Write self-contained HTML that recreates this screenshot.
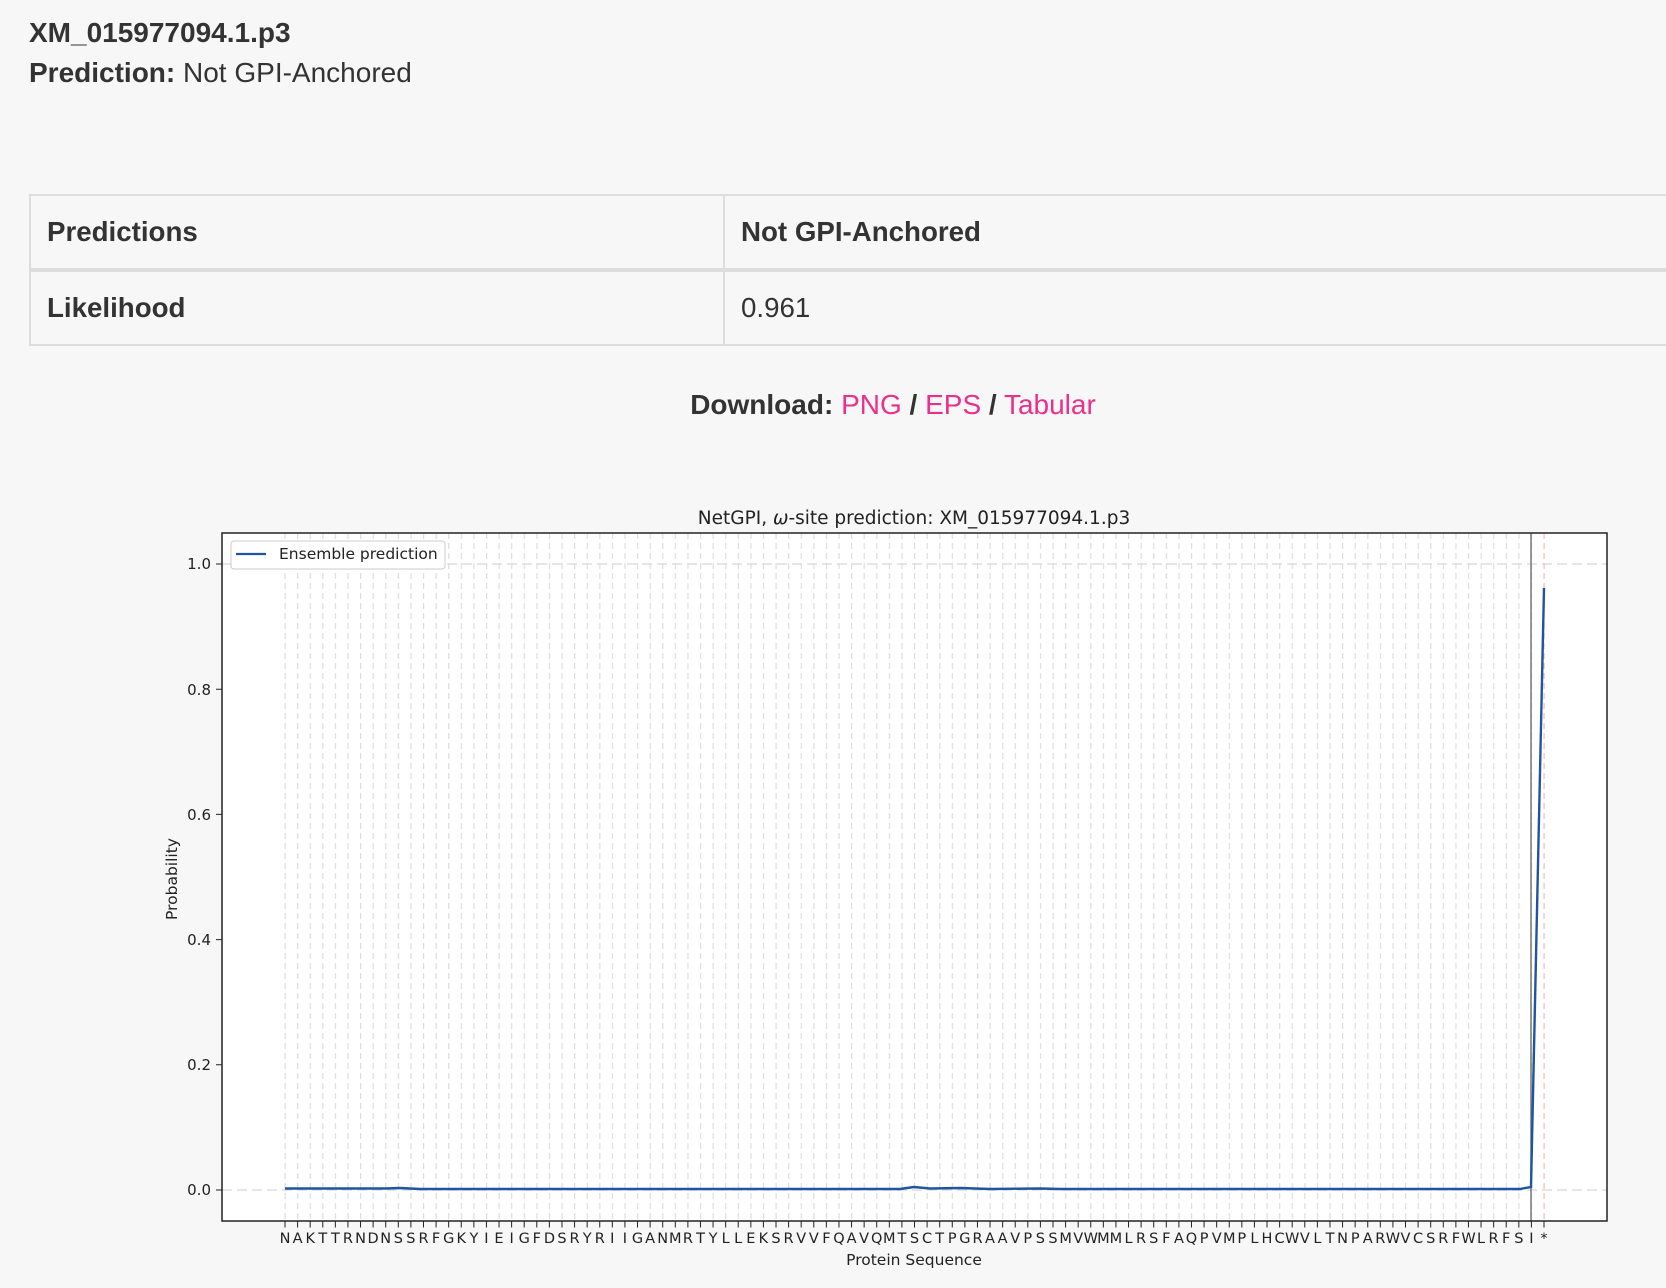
<!DOCTYPE html>
<html><head><meta charset="utf-8"><style>
body{margin:0;background:#f7f7f7;width:1666px;height:1288px;overflow:hidden;font-family:"Liberation Sans",sans-serif;color:#333}
.h{position:absolute;left:29px;font-size:28px}
table{position:absolute;left:29px;top:194px;width:1700px;border-collapse:collapse;font-size:27.7px}
td{border:2px solid #ddd;padding:0 16px;height:72px}
tr:first-child td{border-bottom:4px solid #ddd;font-weight:bold}
td:first-child{width:660px;font-weight:bold}
.dl{position:absolute;top:389px;left:0;width:1786px;text-align:center;font-size:28px}
.dl a{color:#ec2f8a;text-decoration:none}
svg{position:absolute;left:0;top:0}
</style></head><body>
<div class="h" style="top:17px;font-weight:bold">XM_015977094.1.p3</div>
<div class="h" style="top:57px"><b>Prediction:</b> Not GPI-Anchored</div>
<table><tr><td>Predictions</td><td>Not GPI-Anchored</td></tr><tr><td>Likelihood</td><td>0.961</td></tr></table>
<div class="dl"><b>Download:</b> <a>PNG</a> <b>/</b> <a>EPS</a> <b>/</b> <a>Tabular</a></div>
<svg width="1666" height="1288" font-family="DejaVu Sans,sans-serif">
<defs><pattern id="g" patternUnits="userSpaceOnUse" x="284.5" y="533" width="12.59" height="10"><rect x="0" y="0" width="1.2" height="6" fill="#ddd"/></pattern></defs>
<rect x="222" y="533" width="1385" height="688" fill="#fff"/>
<rect x="284" y="533" width="1262" height="688" fill="url(#g)"/>
<line x1="222" y1="1190" x2="1607" y2="1190" stroke="#ddd" stroke-width="1.5" stroke-dasharray="10 5"/>
<line x1="222" y1="564" x2="1607" y2="564" stroke="#ddd" stroke-width="1.5" stroke-dasharray="10 5"/>
<line x1="1544" y1="533" x2="1544" y2="1221" stroke="#f5b5b5" stroke-width="1" stroke-dasharray="6 4"/>
<line x1="1531" y1="533" x2="1531" y2="1221" stroke="#777" stroke-width="1.5"/>
<path d="M285 1188.5 L385 1188.5 L400 1188 L420 1189 L900 1189 L914 1187 L930 1188.5 L960 1188 L990 1189 L1040 1188.5 L1060 1189 L1520 1189 L1531 1187 L1544 588" fill="none" stroke="#1f55a0" stroke-width="2.4"/>
<rect x="222" y="533" width="1385" height="688" fill="none" stroke="#222" stroke-width="1.5"/>
<rect x="231" y="541" width="214" height="28" rx="3" fill="#fff" stroke="#ccc"/>
<line x1="236" y1="554" x2="266" y2="554" stroke="#1f55a0" stroke-width="2.2"/>
<text x="279" y="559" font-size="15.5" fill="#222">Ensemble prediction</text>
<text x="914" y="524" font-size="18.5" text-anchor="middle" fill="#222">NetGPI, <tspan font-style="italic">ω</tspan>-site prediction: XM_015977094.1.p3</text>
<g font-size="15" fill="#222" text-anchor="end">
<text x="211" y="569">1.0</text><text x="211" y="695">0.8</text><text x="211" y="820">0.6</text><text x="211" y="945">0.4</text><text x="211" y="1070">0.2</text><text x="211" y="1195">0.0</text></g>
<path d="M216 564H222M216 689.2H222M216 814.4H222M216 939.6H222M216 1064.8H222M216 1190H222" stroke="#222"/>
<line x1="284.5" y1="1224.5" x2="1546" y2="1224.5" stroke="#222" stroke-width="6" stroke-dasharray="1 11.59"/>
<text transform="translate(177 879) rotate(-90)" font-size="15.5" text-anchor="middle" fill="#222">Probability</text>
<text x="914" y="1265" font-size="15.5" text-anchor="middle" fill="#222">Protein Sequence</text>
<text y="1243" font-size="14.5" text-anchor="middle" fill="#222" x="285 297.6 310.2 322.8 335.4 347.9 360.5 373.1 385.7 398.3 410.9 423.5 436.1 448.7 461.3 473.9 486.4 499.0 511.6 524.2 536.8 549.4 562.0 574.6 587.2 599.8 612.3 624.9 637.5 650.1 662.7 675.3 687.9 700.5 713.1 725.7 738.2 750.8 763.4 776.0 788.6 801.2 813.8 826.4 839.0 851.6 864.1 876.7 889.3 901.9 914.5 927.1 939.7 952.3 964.9 977.5 990.0 1002.6 1015.2 1027.8 1040.4 1053.0 1065.6 1078.2 1090.8 1103.4 1115.9 1128.5 1141.1 1153.7 1166.3 1178.9 1191.5 1204.1 1216.7 1229.3 1241.8 1254.4 1267.0 1279.6 1292.2 1304.8 1317.4 1330.0 1342.6 1355.2 1367.7 1380.3 1392.9 1405.5 1418.1 1430.7 1443.3 1455.9 1468.5 1481.1 1493.6 1506.2 1518.8 1531.4 1544.0">NAKTTRNDNSSRFGKYIEIGFDSRYRIIGANMRTYLLEKSRVVFQAVQMTSCTPGRAAVPSSMVWMMLRSFAQPVMPLHCWVLTNPARWVCSRFWLRFSI*</text>
</svg>
</body></html>
